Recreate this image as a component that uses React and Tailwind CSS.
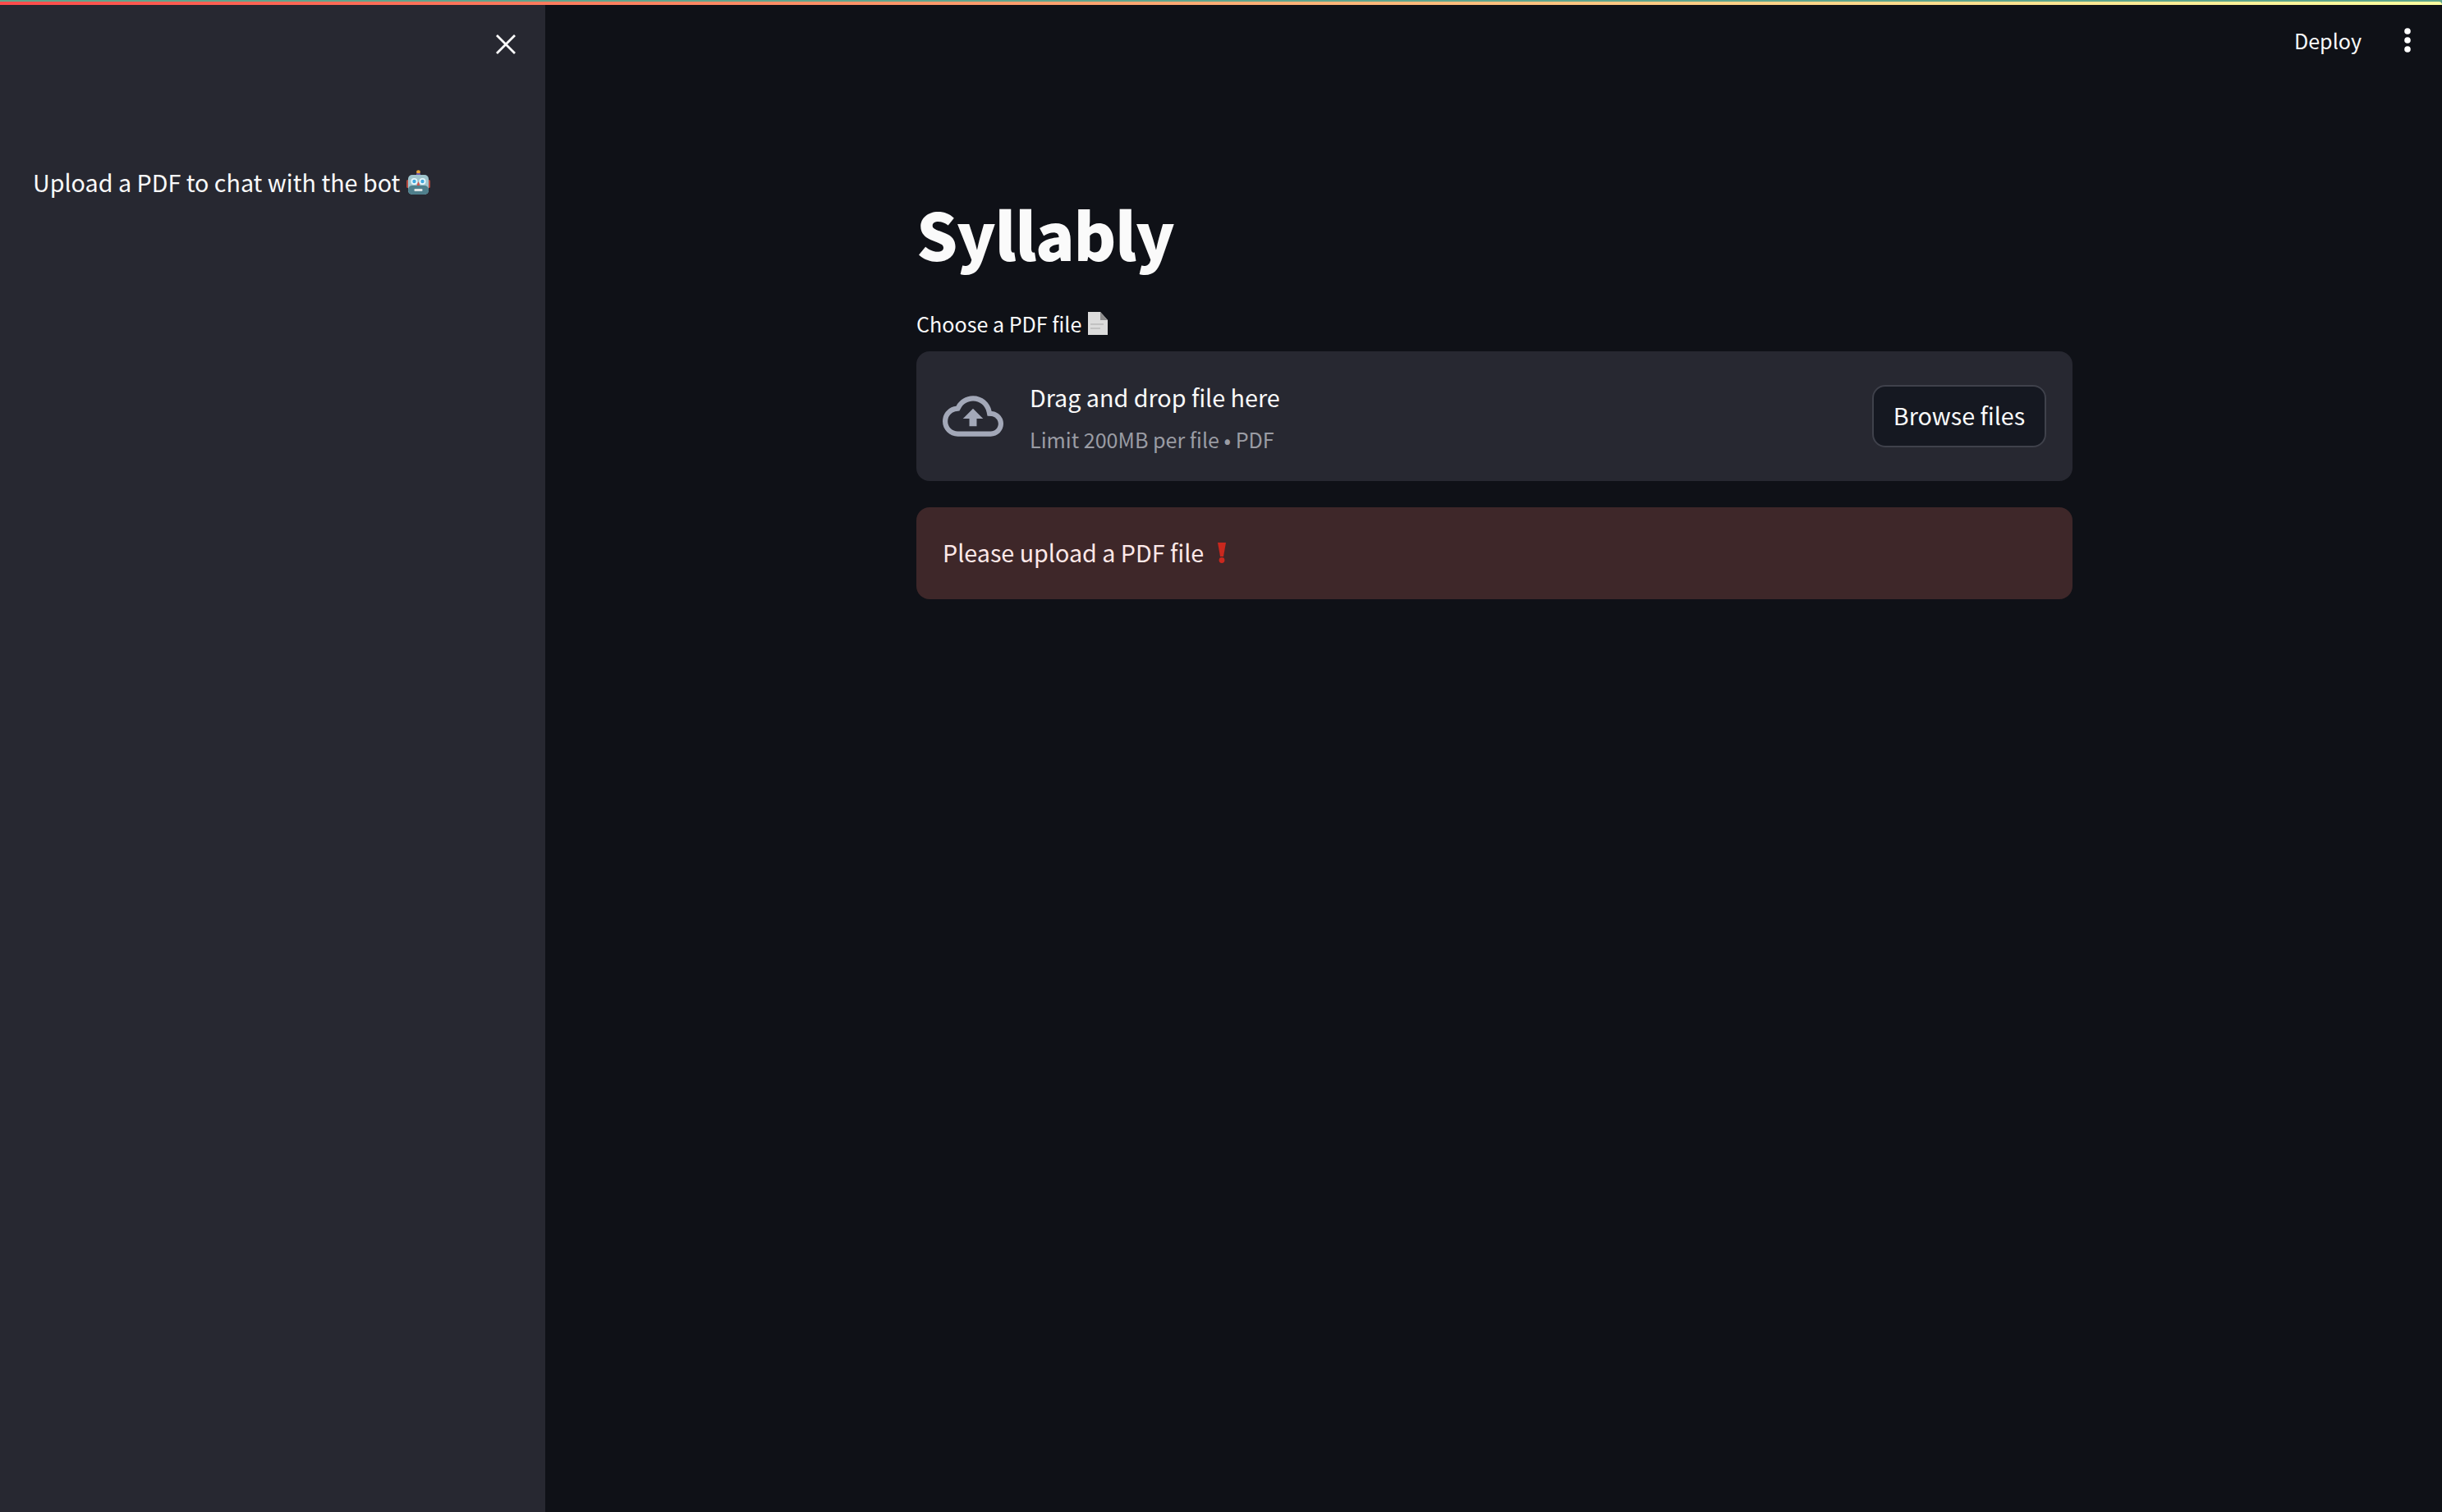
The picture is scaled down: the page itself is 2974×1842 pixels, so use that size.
import React from "react";

const font = { fontFamily: '"Noto Sans CJK JP", "Noto Sans", sans-serif' };

function Robot() {
  return (
    <svg width="29" height="30" viewBox="0 0 29 30" className="shrink-0">
      <circle cx="14.5" cy="2.6" r="2.4" fill="#e8a33a" />
      <rect x="12" y="4" width="5" height="3" rx="1" fill="#6b57a8" />
      <rect x="0" y="12" width="4" height="10" rx="1.5" fill="#b5473c" />
      <rect x="25" y="12" width="4" height="10" rx="1.5" fill="#b5473c" />
      <rect x="2" y="6" width="25" height="24" rx="5" fill="#9fc4cc" />
      <rect x="2" y="19" width="25" height="11" rx="5" fill="#4f7f8c" />
      <circle cx="9.5" cy="14" r="4" fill="#e8f7fb" />
      <circle cx="19.5" cy="14" r="4" fill="#e8f7fb" />
      <circle cx="9.5" cy="14" r="2.2" fill="#3fa9df" />
      <circle cx="19.5" cy="14" r="2.2" fill="#3fa9df" />
      <path d="M14.5 14 l2 5 h-4 z" fill="#d9534a" />
      <rect x="9.5" y="23" width="10" height="3" rx="1" fill="#dfe5e6" />
    </svg>
  );
}

function Doc() {
  return (
    <svg width="24" height="28" viewBox="0 0 24 28" className="shrink-0">
      <path d="M0 0 H15 L24 10 V28 H0 Z" fill="#dcdcdc" />
      <path d="M15 0 L24 10 H15 Z" fill="#8e8e8e" />
      <rect x="3" y="14" width="16" height="2" fill="#c2c2c2" />
      <rect x="3" y="19" width="12" height="2" fill="#c2c2c2" />
    </svg>
  );
}

function Bang() {
  return (
    <svg width="10" height="25" viewBox="0 0 10 25" className="shrink-0">
      <path d="M0 0 H10 L7 17 H3 Z" fill="#c9281e" />
      <circle cx="5" cy="21.5" r="3.4" fill="#c9281e" />
    </svg>
  );
}

export default function App() {
  return (
    <div className="h-[1842px] w-[2974px] flex flex-col overflow-hidden bg-[#0f1117] text-white" style={font}>
      <div className="h-[6px] pt-[2px] bg-[#5fa58c] shrink-0">
        <div className="h-[4px] bg-gradient-to-r from-[#ff4b4b] to-[#ffffa0] rounded-tr-[8px]" />
      </div>
      <div className="flex-1 flex min-h-0">
        <aside className="w-[664px] shrink-0 bg-[#272831] flex flex-col">
          <div className="flex justify-end pt-[36px] pr-[36px]">
            <svg width="24" height="24" viewBox="0 0 24 24" fill="none" stroke="#ffffff" strokeWidth="2.8">
              <path d="M1 1 L23 23 M23 1 L1 23" />
            </svg>
          </div>
          <div className="mt-[132px] pl-[40px] flex items-center gap-[8px] text-[28.7px] leading-[48px] text-[#fafafa]">
            <span>Upload a PDF to chat with the bot</span>
            <Robot />
          </div>
        </aside>
        <main className="flex-1 flex flex-col relative">
          <div className="flex justify-end items-center h-[44px] mt-[21px] pr-[36px] gap-[50px]">
            <span className="text-[25.1px] leading-[44px] text-[#fafafa]">Deploy</span>
            <svg width="12" height="32" viewBox="0 0 12 32" fill="#ffffff">
              <circle cx="6" cy="5" r="3.8" />
              <circle cx="6" cy="16" r="3.8" />
              <circle cx="6" cy="27" r="3.8" />
            </svg>
          </div>
          <div className="w-[1408px] ml-[452px] flex flex-col mt-[160px]">
            <h1 className="text-[79px] leading-[106px] font-black tracking-[-1.4px] text-[#fafafa]">Syllably</h1>
            <div className="mt-[37px] flex items-center gap-[8px] text-[25.1px] leading-[40px] text-[#fafafa]">
              <span>Choose a PDF file</span>
              <Doc />
            </div>
            <div className="mt-[14px] h-[158px] rounded-[16px] bg-[#272831] flex items-center pl-[32px] pr-[32px]">
              <svg width="74" height="74" viewBox="0 0 24 24" fill="#a3a8b8" className="shrink-0">
                <path d="M19.35 10.04C18.67 6.59 15.64 4 12 4 9.11 4 6.6 5.64 5.35 8.04 2.34 8.36 0 10.91 0 14c0 3.31 2.69 6 6 6h13c2.76 0 5-2.24 5-5 0-2.64-2.05-4.78-4.65-4.96zM19 18H6c-2.21 0-4-1.79-4-4 0-2.05 1.53-3.76 3.56-3.97l1.07-.11.5-.95C8.08 7.14 9.94 6 12 6c2.62 0 4.88 1.86 5.39 4.43l.3 1.5 1.53.11c1.56.1 2.78 1.41 2.78 2.96 0 1.65-1.35 3-3 3zM8 13h2.55v3h2.9v-3H16l-4-4z" />
              </svg>
              <div className="ml-[32px] flex flex-col flex-1">
                <span className="text-[28.7px] leading-[48px] text-[#fafafa]">Drag and drop file here</span>
                <span className="text-[25.1px] leading-[40px] mt-[7px] text-[#9a9ca4]">Limit 200MB per file • PDF</span>
              </div>
              <button className="w-[212px] h-[76px] pb-[2px] rounded-[16px] border-2 border-[#3f414b] bg-[#151821] text-[28.7px] text-[#fafafa]">
                Browse files
              </button>
            </div>
            <div className="mt-[32px] h-[112px] pb-[2px] rounded-[16px] bg-[#3e2729] flex items-center pl-[32px] gap-[17px] text-[28.7px] text-[#fde8e8]">
              <span>Please upload a PDF file</span>
              <Bang />
            </div>
          </div>
        </main>
      </div>
    </div>
  );
}
